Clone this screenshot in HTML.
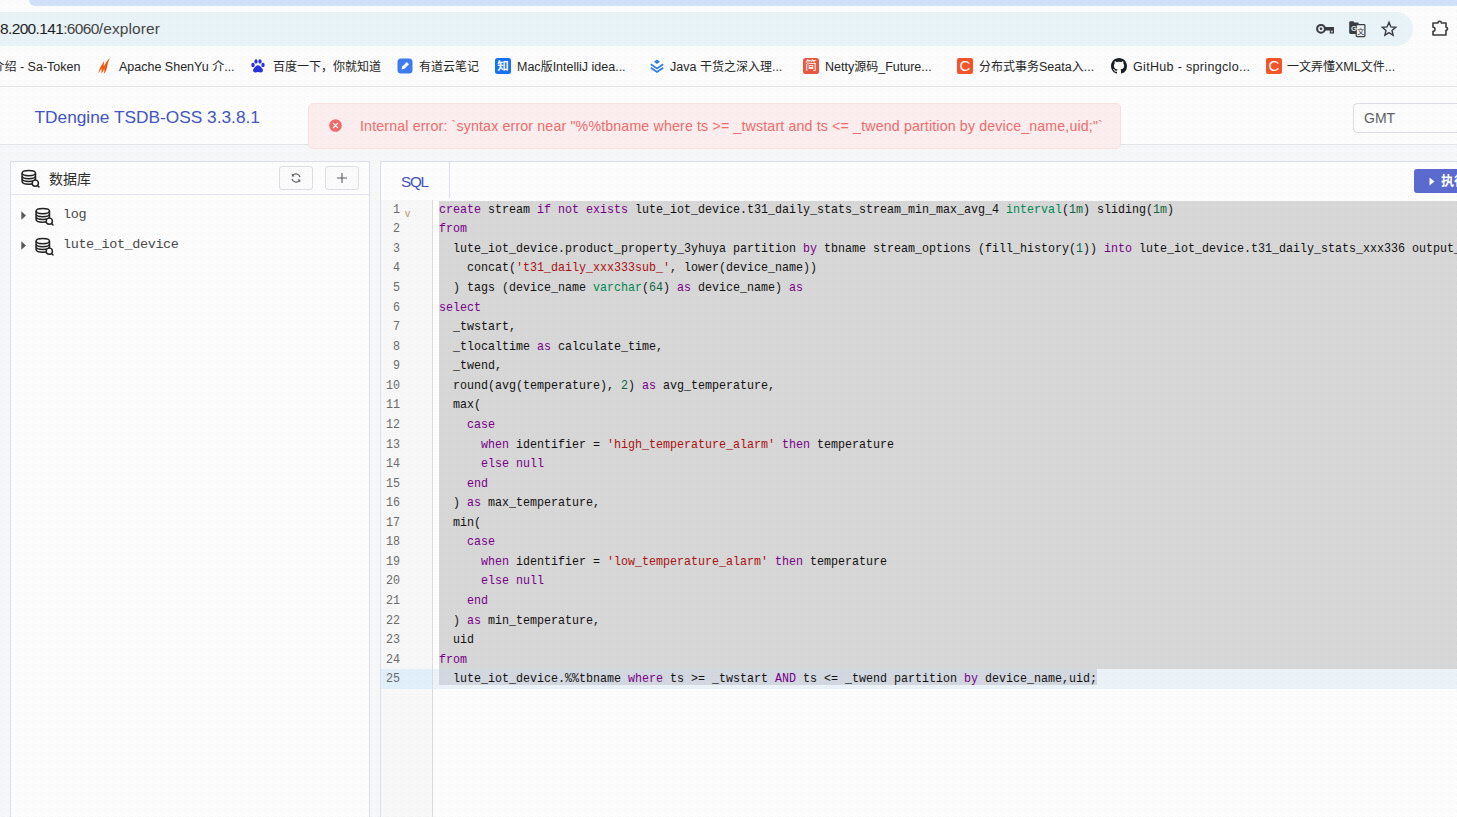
<!DOCTYPE html>
<html lang="zh">
<head>
<meta charset="utf-8">
<title>TDengine Explorer</title>
<style>
*{box-sizing:border-box;margin:0;padding:0}
html,body{width:1457px;height:817px;overflow:hidden;background:#fefefe}
body{position:relative;font-family:"Liberation Sans","Noto Sans CJK SC",sans-serif;color:#222;-webkit-font-smoothing:antialiased}
.abs{position:absolute}
/* browser chrome */
#topstrip{left:29px;top:0;width:1429px;height:6px;background:#d3e3fd;border-bottom-left-radius:9px}
#addr{left:-20px;top:12px;width:1433px;height:34px;background:#eaf5fa;border-radius:17px}
#url{left:0;top:19px;font-size:15.5px;line-height:20px;color:#1f1f1f;white-space:nowrap;letter-spacing:-0.64px}
#url span{color:#474747}
#url i{font-style:normal;letter-spacing:0.1px}
.bm{top:58px;height:18px;line-height:18px;font-size:12.5px;color:#262626;white-space:nowrap}
.bm .c{font-size:12px}
.ico{top:58px;width:16px;height:16px}
#chromeline{left:0;top:86px;width:1457px;height:1px;background:#e4e6e9}
/* app header */
#hdr{left:0;top:87px;width:1457px;height:58px;background:#ffffff;border-bottom:1px solid #e6e7ea}
#title{left:34.500px;top:104.500px;font-size:17.300px;line-height:24px;color:#4254c6;white-space:nowrap}
#toast{left:308px;top:103px;width:813px;height:46px;background:#fef0f0;border:1px solid #fde2e2;border-radius:5px}
#toasttxt{left:360px;top:116px;font-size:14.2px;letter-spacing:0.155px;line-height:20px;color:#f26c6c;white-space:nowrap}
#gmt{left:1352.5px;top:102.5px;width:120px;height:30.700px;border:1px solid #dcdfe6;border-radius:4px;background:#fff}
#gmttxt{left:1364px;top:108px;font-size:14px;line-height:20px;color:#5f6166}
/* body */
#main{left:0;top:145px;width:1457px;height:672px;background:#f8f9fa}
.panel{background:#ffffff;border:1px solid #dee0f0}
#lp{left:10px;top:161px;width:360px;height:670px}
#lphead{left:11px;top:162px;width:358px;height:33px;border-bottom:1px solid #e6e7f4}
#rp{left:380px;top:161px;width:1100px;height:670px}
.btn{top:166px;width:34px;height:24px;border:1px solid #dcdfe6;border-radius:3px;background:#fdfdfe}
.tree{font-family:"Liberation Mono",monospace;font-size:13.5px;letter-spacing:-0.4px;line-height:20px;color:#4a4a4a;white-space:nowrap}
/* editor */
#gutter{left:381px;top:200px;width:52px;height:617px;background:#fafafa;border-right:1px solid #dedede}
#sel{left:439px;top:201px;width:1018px;height:468px;background:#d9d9d9}
#actg{left:381px;top:669px;width:51px;height:19.800px;background:#e2f1fb}
#actl{left:433px;top:669px;width:1024px;height:19.800px;background:#edf4fa}
#sel25{left:439px;top:669px;width:658px;height:16px;background:#d5d9e1}
.ln{left:360px;width:40px;text-align:right;font-family:"Liberation Mono",monospace;font-size:13.5px;color:#6c6c6c;height:19.56px;line-height:19.56px;transform:scaleX(0.864);transform-origin:100% 0;margin-top:0px}
.cl{left:439px;font-family:"Liberation Mono",monospace;font-size:13.5px;color:#111;height:19.56px;line-height:19.56px;white-space:pre;transform:scaleX(0.8641);transform-origin:0 0;margin-top:0px}
.k{color:#770088}.t{color:#008855}.n{color:#116644}.s{color:#aa1111}
</style>
</head>
<body>
<!-- CHROME -->
<div class="abs" id="topstrip"></div>
<div class="abs" id="addr"></div>
<div class="abs" id="url">8.200.141<span>:6060<i>/explorer</i></span></div>
<!-- BOOKMARKS -->
<div class="abs bm" style="left:-7.5px"><span class="c">介绍</span> - Sa-Token</div>
<svg class="abs" style="left:96px;top:57px;width:16px;height:18px" viewBox="0 0 16 18"><path d="M2.200 16.500 C3.500 12 5.500 7.500 8.300 3.800 C7.800 6.300 7.600 8 7.900 9.600 C9.200 6.500 11.200 3.500 13.800 1 C12.300 4.500 11.200 8.200 10.800 11.500 C10.300 13.500 9.300 15.500 7.800 16.800 C8.300 15 8.500 13.400 8.300 11.800 C7.500 13.600 6.500 15.300 5.200 16.500 C5.600 14.800 5.700 13.200 5.500 11.600 C4.600 13.400 3.500 15.100 2.200 16.500 Z" fill="#f4590f"/></svg>
<div class="abs bm" style="left:119px">Apache ShenYu <span class="c">介</span>...</div>
<svg class="abs ico" style="left:250px" viewBox="0 0 16 16"><g fill="#2932e1"><ellipse cx="3" cy="7" rx="1.7" ry="2.2"/><ellipse cx="6" cy="3.4" rx="1.6" ry="2.2"/><ellipse cx="10" cy="3.4" rx="1.6" ry="2.2"/><ellipse cx="13" cy="7" rx="1.7" ry="2.2"/><path d="M8 7.2c2 0 3 2 4.4 3.6 1.2 1.4.4 3.7-1.6 3.7-1.1 0-1.8-.4-2.8-.4s-1.700.4-2.800.4c-2 0-2.800-2.300-1.600-3.700C5 9.200 6 7.200 8 7.200z"/></g></svg>
<div class="abs bm" style="left:273px"><span class="c">百度一下，你就知道</span></div>
<svg class="abs ico" style="left:397px" viewBox="0 0 16 16"><rect x="0.500" y="0.500" width="15" height="15" rx="3.500" fill="#3f7cf0"/><path d="M4.500 11.500 L5.200 8.600 L9.800 4 L12 6.200 L7.400 10.800 Z" fill="#fff"/></svg>
<div class="abs bm" style="left:419px"><span class="c">有道云笔记</span></div>
<div class="abs" style="left:495px;top:58px;width:16px;height:16px;border-radius:2.500px;background:#1772f6;color:#fff;font-size:11.500px;line-height:16px;text-align:center;font-weight:bold">知</div>
<div class="abs bm" style="left:517px">Mac<span class="c">版</span>IntelliJ idea...</div>
<svg class="abs ico" style="left:649px" viewBox="0 0 16 16"><g fill="none" stroke="#2d80e2" stroke-width="1.700" stroke-linejoin="miter" stroke-linecap="butt"><path d="M1.800 6.200 L8 10.400 L14.200 6.200"/><path d="M1.800 9.800 L8 14 L14.200 9.800"/></g><path d="M8 1.600 L11 3.800 L8 6 L5 3.800 Z" fill="#2d80e2"/></svg>
<div class="abs bm" style="left:670px">Java <span class="c">干货之深入理</span>...</div>
<div class="abs" style="left:803px;top:58px;width:16px;height:16px;border-radius:2.500px;background:#e9583f;color:#fff;font-size:12px;line-height:16px;text-align:center">简</div>
<div class="abs bm" style="left:825px">Netty<span class="c">源码</span>_Future...</div>
<div class="abs" style="left:957px;top:58px;width:16px;height:16px;border-radius:2px;background:#f6552c;color:#fff;font-size:15px;line-height:16px;text-align:center">C</div>
<div class="abs bm" style="left:979px"><span class="c">分布式事务</span>Seata<span class="c">入</span>...</div>
<svg class="abs ico" style="left:1111px" viewBox="0 0 16 16"><path fill="#1b1f23" d="M8 0C3.580 0 0 3.580 0 8c0 3.540 2.290 6.530 5.470 7.590.4.070.550-.170.550-.380 0-.190-.010-.820-.010-1.490-2.010.370-2.530-.490-2.690-.940-.090-.230-.480-.940-.820-1.130-.280-.150-.680-.520-.010-.530.630-.010 1.080.580 1.230.820.720 1.210 1.870.870 2.330.660.070-.520.280-.870.510-1.070-1.780-.2-3.640-.890-3.640-3.950 0-.870.310-1.590.820-2.150-.080-.2-.360-1.020.080-2.120 0 0 .670-.210 2.200.820.640-.180 1.320-.270 2-.270s1.360.090 2 .270c1.530-1.040 2.200-.820 2.200-.820.440 1.100.160 1.920.080 2.120.510.560.820 1.270.820 2.150 0 3.070-1.870 3.750-3.650 3.950.290.250.540.730.540 1.480 0 1.070-.010 1.930-.010 2.200 0 .210.150.460.550.380A8.010 8.010 0 0016 8c0-4.420-3.580-8-8-8z"/></svg>
<div class="abs bm" style="left:1133px;letter-spacing:0.33px">GitHub - springclo...</div>
<div class="abs" style="left:1266px;top:58px;width:16px;height:16px;border-radius:2px;background:#f6552c;color:#fff;font-size:15px;line-height:16px;text-align:center">C</div>
<div class="abs bm" style="left:1287px"><span class="c">一文弄懂</span>XML<span class="c">文件</span>...</div>
<!-- ADDR ICONS -->
<svg class="abs" style="left:1315px;top:20px;width:20px;height:18px" viewBox="0 0 20 18"><circle cx="6" cy="8.800" r="3.900" fill="none" stroke="#3a3c40" stroke-width="2"/><circle cx="6" cy="8.800" r="1.300" fill="#3a3c40"/><path d="M10 7 H19 V13.500 H14.800 V10.600 H10 Z" fill="#3a3c40"/><rect x="15.900" y="10.600" width="2" height="1.800" fill="#b9c2c8"/></svg>
<svg class="abs" style="left:1348px;top:20px;width:19px;height:19px" viewBox="0 0 19 19"><path d="M1.200 2.500 a1.300 1.300 0 0 1 1.300 -1.300 H5.500 L6.300 2.600 H9.500 a1.300 1.300 0 0 1 1.300 1.300 V12.600 a1.300 1.300 0 0 1 -1.300 1.300 H2.500 a1.300 1.300 0 0 1 -1.300 -1.300 Z" fill="#3a3c40"/><rect x="8.200" y="4.600" width="8.700" height="12" rx="0.800" fill="#eef4f7" stroke="#3a3c40" stroke-width="1.200"/><text x="3" y="10.800" font-size="7.500" font-weight="bold" fill="#e8f0f4" font-family="Liberation Sans,sans-serif">G</text><text x="9.300" y="13.800" font-size="7" fill="#3a3c40" font-family="Liberation Sans,Noto Sans CJK SC,sans-serif">文</text></svg>
<svg class="abs" style="left:1380px;top:20px;width:18px;height:18px" viewBox="0 0 18 18"><path d="M9 2.300 L10.900 6.900 L15.700 7.300 L12 10.500 L13.100 15.300 L9 12.700 L4.900 15.300 L6 10.500 L2.300 7.300 L7.100 6.900 Z" fill="none" stroke="#3a3c40" stroke-width="1.400" stroke-linejoin="miter"/></svg>
<svg class="abs" style="left:1430px;top:18px;width:20px;height:20px" viewBox="0 0 20 20"><path d="M3 5 H8 a1.700 1.700 0 0 1 3.400 0 H16 V9.300 a1.500 1.500 0 0 1 0 3 V17 H3 V13.200 a2 2 0 0 0 0 -4 Z" fill="none" stroke="#3a3c40" stroke-width="1.600" stroke-linejoin="round"/></svg>
<!-- HEADER -->
<div class="abs" id="chromeline"></div>
<div class="abs" id="main"></div>
<div class="abs" id="hdr"></div>
<div class="abs" id="title">TDengine TSDB-OSS 3.3.8.1</div>
<div class="abs" id="toast"></div>
<div class="abs" id="toasttxt">Internal error: `syntax error near "%%tbname where ts &gt;= _twstart and ts &lt;= _twend partition by device_name,uid;"`</div>
<div class="abs" id="gmt"></div>
<div class="abs" id="gmttxt">GMT</div>
<!-- MAIN -->
<div class="abs panel" id="lp"></div>
<div class="abs" id="lphead"></div>
<div class="abs panel" id="rp"></div>
<!-- LEFT PANEL CONTENT -->
<svg class="abs" style="left:20px;top:169px;width:20px;height:19px" viewBox="0 0 20 19"><g fill="none" stroke="#222" stroke-width="1.45"><ellipse cx="8.800" cy="4.100" rx="6.700" ry="2.700"/><path d="M2.100 4.100 V12.600 c0 1.500 3 2.700 6.700 2.700 s6.700 -1.200 6.700 -2.700 V4.100"/><path d="M2.100 7 c0 1.500 3 2.700 6.700 2.700 s6.700 -1.200 6.700 -2.700"/><path d="M2.100 9.800 c0 1.500 3 2.700 6.700 2.700 s6.700 -1.200 6.700 -2.700"/><circle cx="15.300" cy="14.200" r="3.100" fill="#ffffff"/><path d="M17.500 16.400 L19 17.900" stroke-linecap="round"/></g></svg>
<div class="abs" style="left:49px;top:169px;font-size:14px;line-height:20px;color:#2e2e2e;font-weight:400;white-space:nowrap">数据库</div>
<div class="abs btn" style="left:279px"></div>
<svg class="abs" style="left:290px;top:172px;width:12px;height:12px" viewBox="0 0 12 12"><g fill="none" stroke="#5a5c61" stroke-width="1.200"><path d="M10 5.200 A4.100 4.100 0 0 0 2.700 3.500"/><path d="M2 6.800 A4.100 4.100 0 0 0 9.300 8.500"/></g><path d="M1.800 1.600 V4.400 H4.600 Z M10.200 10.400 V7.600 H7.400 Z" fill="#5a5c61"/></svg>
<div class="abs btn" style="left:325px"></div>
<svg class="abs" style="left:336px;top:172px;width:12px;height:12px" viewBox="0 0 12 12"><path d="M6 1 V11 M1 6 H11" stroke="#5a5c61" stroke-width="1.100" fill="none"/></svg>
<svg class="abs" style="left:21px;top:211px;width:6px;height:9px" viewBox="0 0 6 9"><path d="M0.300 0.300 L5 4.500 L0.300 8.700 Z" fill="#5a5a5a"/></svg>
<svg class="abs" style="left:34px;top:207px;width:20px;height:19px" viewBox="0 0 20 19"><g fill="none" stroke="#222" stroke-width="1.45"><ellipse cx="8.800" cy="4.100" rx="6.700" ry="2.700"/><path d="M2.100 4.100 V12.600 c0 1.500 3 2.700 6.700 2.700 s6.700 -1.200 6.700 -2.700 V4.100"/><path d="M2.100 7 c0 1.500 3 2.700 6.700 2.700 s6.700 -1.200 6.700 -2.700"/><path d="M2.100 9.800 c0 1.500 3 2.700 6.700 2.700 s6.700 -1.200 6.700 -2.700"/><circle cx="15.300" cy="14.200" r="3.100" fill="#ffffff"/><path d="M17.500 16.400 L19 17.900" stroke-linecap="round"/></g></svg>
<div class="abs tree" style="left:63px;top:205px">log</div>
<svg class="abs" style="left:21px;top:241px;width:6px;height:9px" viewBox="0 0 6 9"><path d="M0.300 0.300 L5 4.500 L0.300 8.700 Z" fill="#5a5a5a"/></svg>
<svg class="abs" style="left:34px;top:237px;width:20px;height:19px" viewBox="0 0 20 19"><g fill="none" stroke="#222" stroke-width="1.45"><ellipse cx="8.800" cy="4.100" rx="6.700" ry="2.700"/><path d="M2.100 4.100 V12.600 c0 1.500 3 2.700 6.700 2.700 s6.700 -1.200 6.700 -2.700 V4.100"/><path d="M2.100 7 c0 1.500 3 2.700 6.700 2.700 s6.700 -1.200 6.700 -2.700"/><path d="M2.100 9.800 c0 1.500 3 2.700 6.700 2.700 s6.700 -1.200 6.700 -2.700"/><circle cx="15.300" cy="14.200" r="3.100" fill="#ffffff"/><path d="M17.500 16.400 L19 17.900" stroke-linecap="round"/></g></svg>
<div class="abs tree" style="left:63px;top:235px">lute_iot_device</div>
<!-- TAB + RUN -->
<div class="abs" style="left:381px;top:162px;width:69px;height:36px;border-right:1px solid #dfe1f1;background:#ffffff"></div>
<div class="abs" style="left:401px;top:172px;font-size:15.2px;line-height:20px;color:#4151c0;white-space:nowrap;letter-spacing:-1.2px">SQL</div>
<div class="abs" style="left:1414px;top:169px;width:60px;height:24px;background:#5c6bcf;border-radius:3px"></div>
<svg class="abs" style="left:1429px;top:176.500px;width:6px;height:9px" viewBox="0 0 6 9"><path d="M0.500 0.500 L5.500 4.500 L0.500 8.500 Z" fill="#fff"/></svg>
<div class="abs" style="left:1441px;top:172px;font-size:13px;line-height:18px;color:#fff;font-weight:bold;white-space:nowrap">执行</div>
<!-- TOAST ICON -->
<svg class="abs" style="left:329px;top:119px;width:13px;height:13px" viewBox="0 0 13 13"><circle cx="6.500" cy="6.500" r="6.300" fill="#f26c6c"/><path d="M4.400 4.400 L8.600 8.600 M8.600 4.400 L4.400 8.600" stroke="#fff" stroke-width="1.300" stroke-linecap="round"/></svg>
<!-- EDITOR -->
<div class="abs" id="gutter"></div>
<div class="abs" id="sel"></div>
<div class="abs" id="actg"></div>
<div class="abs" id="actl"></div>
<div class="abs" id="sel25"></div>
<div class="abs" style="left:405px;top:204.700px;font-family:'Liberation Sans',sans-serif;font-size:10.500px;line-height:16px;color:#c0935f">v</div>
<!-- CODE -->
<div class="abs ln" style="top:199.80px">1</div><div class="abs cl" style="top:199.80px"><span class="k">create</span> stream <span class="k">if</span> <span class="k">not</span> <span class="k">exists</span> lute_iot_device.t31_daily_stats_stream_min_max_avg_4 <span class="t">interval</span>(<span class="n">1m</span>) sliding(<span class="n">1m</span>)</div>
<div class="abs ln" style="top:219.36px">2</div><div class="abs cl" style="top:219.36px"><span class="k">from</span></div>
<div class="abs ln" style="top:238.92px">3</div><div class="abs cl" style="top:238.92px">  lute_iot_device.product_property_3yhuya partition <span class="k">by</span> tbname stream_options (fill_history(<span class="n">1</span>)) <span class="k">into</span> lute_iot_device.t31_daily_stats_xxx336 output_subtable(</div>
<div class="abs ln" style="top:258.48px">4</div><div class="abs cl" style="top:258.48px">    concat(<span class="s">'t31_daily_xxx333sub_'</span>, lower(device_name))</div>
<div class="abs ln" style="top:278.04px">5</div><div class="abs cl" style="top:278.04px">  ) tags (device_name <span class="t">varchar</span>(<span class="n">64</span>) <span class="k">as</span> device_name) <span class="k">as</span></div>
<div class="abs ln" style="top:297.60px">6</div><div class="abs cl" style="top:297.60px"><span class="k">select</span></div>
<div class="abs ln" style="top:317.16px">7</div><div class="abs cl" style="top:317.16px">  _twstart,</div>
<div class="abs ln" style="top:336.72px">8</div><div class="abs cl" style="top:336.72px">  _tlocaltime <span class="k">as</span> calculate_time,</div>
<div class="abs ln" style="top:356.28px">9</div><div class="abs cl" style="top:356.28px">  _twend,</div>
<div class="abs ln" style="top:375.84px">10</div><div class="abs cl" style="top:375.84px">  round(avg(temperature), <span class="n">2</span>) <span class="k">as</span> avg_temperature,</div>
<div class="abs ln" style="top:395.40px">11</div><div class="abs cl" style="top:395.40px">  max(</div>
<div class="abs ln" style="top:414.96px">12</div><div class="abs cl" style="top:414.96px">    <span class="k">case</span></div>
<div class="abs ln" style="top:434.52px">13</div><div class="abs cl" style="top:434.52px">      <span class="k">when</span> identifier = <span class="s">'high_temperature_alarm'</span> <span class="k">then</span> temperature</div>
<div class="abs ln" style="top:454.08px">14</div><div class="abs cl" style="top:454.08px">      <span class="k">else</span> <span class="k">null</span></div>
<div class="abs ln" style="top:473.64px">15</div><div class="abs cl" style="top:473.64px">    <span class="k">end</span></div>
<div class="abs ln" style="top:493.20px">16</div><div class="abs cl" style="top:493.20px">  ) <span class="k">as</span> max_temperature,</div>
<div class="abs ln" style="top:512.76px">17</div><div class="abs cl" style="top:512.76px">  min(</div>
<div class="abs ln" style="top:532.32px">18</div><div class="abs cl" style="top:532.32px">    <span class="k">case</span></div>
<div class="abs ln" style="top:551.88px">19</div><div class="abs cl" style="top:551.88px">      <span class="k">when</span> identifier = <span class="s">'low_temperature_alarm'</span> <span class="k">then</span> temperature</div>
<div class="abs ln" style="top:571.44px">20</div><div class="abs cl" style="top:571.44px">      <span class="k">else</span> <span class="k">null</span></div>
<div class="abs ln" style="top:591.00px">21</div><div class="abs cl" style="top:591.00px">    <span class="k">end</span></div>
<div class="abs ln" style="top:610.56px">22</div><div class="abs cl" style="top:610.56px">  ) <span class="k">as</span> min_temperature,</div>
<div class="abs ln" style="top:630.12px">23</div><div class="abs cl" style="top:630.12px">  uid</div>
<div class="abs ln" style="top:649.68px">24</div><div class="abs cl" style="top:649.68px"><span class="k">from</span></div>
<div class="abs ln" style="top:669.24px">25</div><div class="abs cl" style="top:669.24px">  lute_iot_device.%%tbname <span class="k">where</span> ts &gt;= _twstart <span class="k">AND</span> ts &lt;= _twend partition <span class="k">by</span> device_name,uid;</div>
<!-- TEXTURE -->
<svg class="abs" style="left:0;top:0;width:1457px;height:817px;pointer-events:none" viewBox="0 0 1457 817"><pattern id="wm" width="8" height="8" patternUnits="userSpaceOnUse"><path d="M1 0h4v1h-4zM7 0h1v1h-1zM0 1h1v1h-1zM5 1h1v1h-1zM0 2h1v1h-1zM2 2h2v1h-2zM5 2h1v1h-1zM7 2h1v1h-1zM0 3h1v1h-1zM2 3h1v1h-1zM5 3h1v1h-1zM0 4h1v1h-1zM3 4h2v1h-2zM7 4h1v1h-1zM1 5h1v1h-1zM6 5h1v1h-1zM2 6h4v1h-4zM0 7h1v1h-1zM7 7h1v1h-1z" fill="#000" fill-opacity="0.026"/></pattern><rect width="1457" height="817" fill="url(#wm)"/></svg>
</body>
</html>
